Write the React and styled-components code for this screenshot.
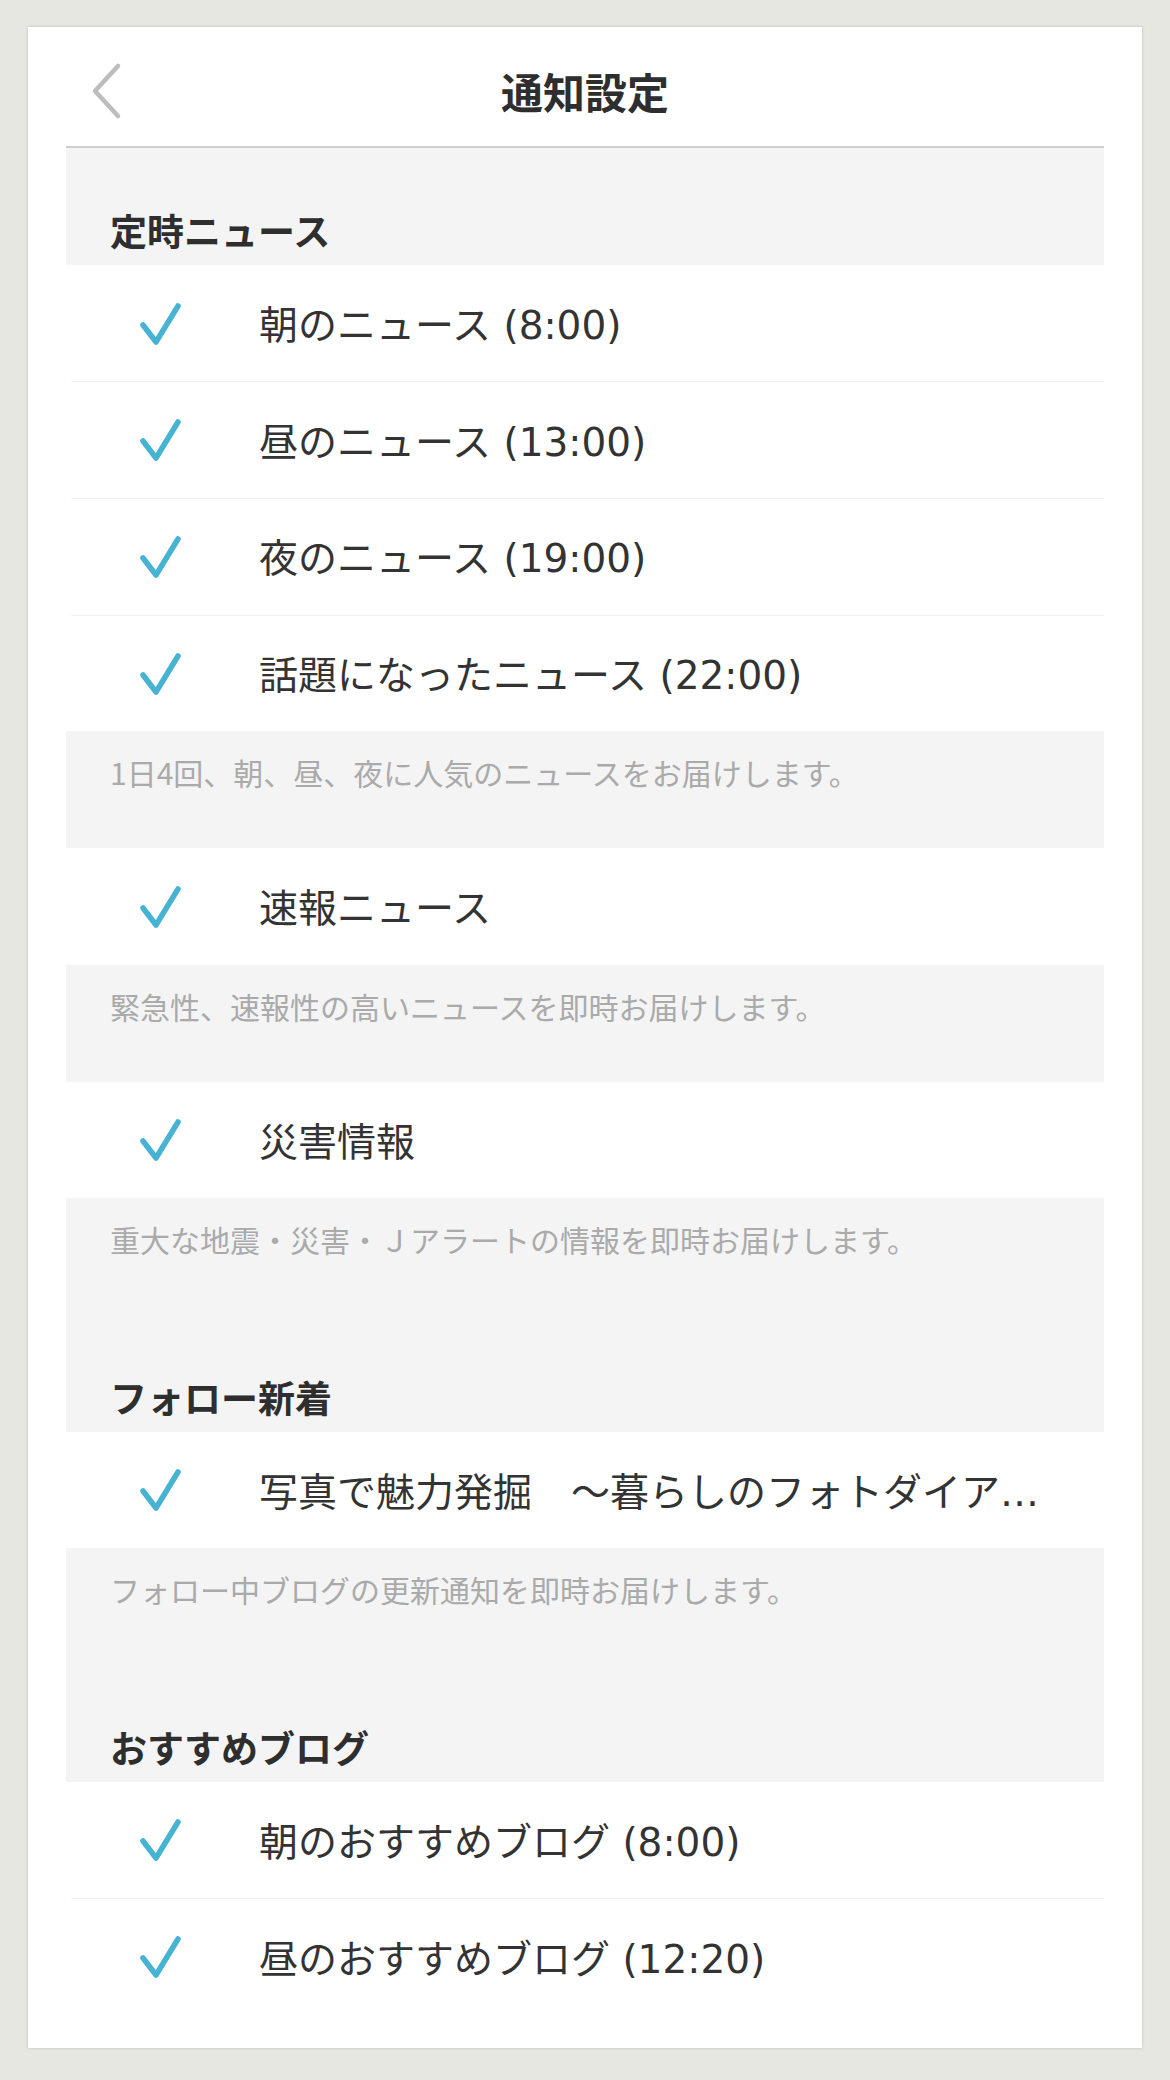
import React from 'react'
import styled, { createGlobalStyle } from 'styled-components'

const GlobalStyle = createGlobalStyle`
  html, body {
    margin: 0;
    padding: 0;
    background: #e7e7e2;
    font-family: "Noto Sans CJK JP", "Noto Sans", sans-serif;
    -webkit-font-smoothing: antialiased;
  }
`

const Page = styled.div`
  width: 1170px;
  min-height: 2080px;
  box-sizing: border-box;
  padding: 27px 28px 30px;
`

const Card = styled.div`
  background: #ffffff;
  box-shadow: 0 0 3px rgba(0, 0, 0, 0.18);
  padding: 0 38px 33px;
`

const Header = styled.div`
  position: relative;
  height: 121px;
  padding-top: 8px;
  box-sizing: border-box;
  display: flex;
  align-items: center;
  justify-content: center;
  border-bottom: 2px solid #cfcfcf;
`

const BackButton = styled.button`
  position: absolute;
  left: 22px;
  top: 35px;
  border: 0;
  background: none;
  padding: 0;
  width: 36px;
  height: 58px;
  cursor: pointer;
`

const Title = styled.h1`
  margin: 0;
  font-size: 42px;
  font-weight: 700;
  color: #2e2e2e;
`

const SectionHeader = styled.div`
  height: 116.7px;
  box-sizing: border-box;
  background: #f4f4f4;
  padding: 61px 44px 0;
  font-size: 37px;
  line-height: 42px;
  font-weight: 700;
  color: #2e2e2e;
`

const Row = styled.div`
  height: 116.7px;
  box-sizing: border-box;
  display: flex;
  align-items: center;
  gap: 77px;
  padding-right: 40px;
  border-top: 1px solid ${({ divided }) => (divided ? '#f1f1f1' : 'transparent')};
  margin-left: ${({ divided }) => (divided ? '5px' : '0')};
  padding-left: ${({ divided }) => (divided ? '67px' : '72px')};
`

const CheckBox = styled.span`
  flex: 0 0 44px;
  width: 44px;
  height: 44px;
  display: flex;
`

const Label = styled.span`
  flex: 1;
  min-width: 0;
  padding-top: 5px;
  font-family: "DejaVu Sans", "Noto Sans CJK JP", sans-serif;
  font-size: 39px;
  line-height: 60px;
  color: #333333;
  white-space: nowrap;
`

const Note = styled.div`
  height: 116.7px;
  box-sizing: border-box;
  background: #f4f4f4;
  padding: 22px 44px 0;
  font-size: 30px;
  line-height: 38px;
  color: #aaaaaa;
`

const Check = () => (
  <svg width="44" height="44" viewBox="0 0 44 44" fill="none">
    <path d="M5 23 L18 40 L40 4" stroke="#47b3d3" strokeWidth="5.5" strokeLinecap="round" strokeLinejoin="round" />
  </svg>
)

const Chevron = () => (
  <svg width="36" height="58" viewBox="0 0 36 58" fill="none">
    <polyline points="30,4 7,29 30,54" stroke="#bdbdbd" strokeWidth="4.5" strokeLinecap="round" strokeLinejoin="round" />
  </svg>
)

const blocks = [
  { kind: 'header', text: '定時ニュース' },
  { kind: 'row', text: '朝のニュース (8:00)' },
  { kind: 'row', text: '昼のニュース (13:00)' },
  { kind: 'row', text: '夜のニュース (19:00)' },
  { kind: 'row', text: '話題になったニュース (22:00)' },
  { kind: 'note', text: '1日4回、朝、昼、夜に人気のニュースをお届けします。' },
  { kind: 'row', text: '速報ニュース' },
  { kind: 'note', text: '緊急性、速報性の高いニュースを即時お届けします。' },
  { kind: 'row', text: '災害情報' },
  { kind: 'note', text: '重大な地震・災害・Ｊアラートの情報を即時お届けします。' },
  { kind: 'header', text: 'フォロー新着' },
  { kind: 'row', text: '写真で魅力発掘　～暮らしのフォトダイア…' },
  { kind: 'note', text: 'フォロー中ブログの更新通知を即時お届けします。' },
  { kind: 'header', text: 'おすすめブログ' },
  { kind: 'row', text: '朝のおすすめブログ (8:00)' },
  { kind: 'row', text: '昼のおすすめブログ (12:20)' },
]

const App = () => {
  return (
    <Page>
      <GlobalStyle />
      <Card>
        <Header>
          <BackButton aria-label="戻る">
            <Chevron />
          </BackButton>
          <Title>通知設定</Title>
        </Header>
        {blocks.map((b, i) => {
          if (b.kind === 'header') return <SectionHeader key={i}>{b.text}</SectionHeader>
          if (b.kind === 'note') return <Note key={i}>{b.text}</Note>
          const prev = blocks[i - 1]
          return (
            <Row key={i} divided={prev && prev.kind === 'row'}>
              <CheckBox>
                <Check />
              </CheckBox>
              <Label>{b.text}</Label>
            </Row>
          )
        })}
      </Card>
    </Page>
  )
}

export default App
